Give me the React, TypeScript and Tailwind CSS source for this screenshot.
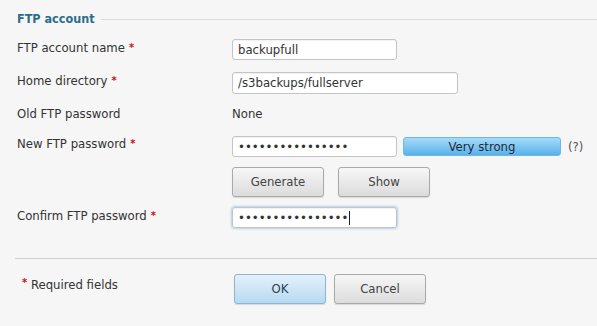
const font = { fontFamily: '"DejaVu Sans Condensed", "DejaVu Sans", Verdana, sans-serif' };

function Req() {
  return <span className="text-[#cc1111] font-bold ml-1 text-[11px] align-top">*</span>;
}

function Label({ text, req }: { text: string; req?: boolean }) {
  return (
    <div className="w-[215px] shrink-0 text-[13px] text-[#333] leading-[16px]">
      {text}
      {req && <Req />}
    </div>
  );
}

function Input({ value, width, tall, caret }: { value: string; width: string; tall?: boolean; caret?: boolean }) {
  return (
    <div
      className={`${width} ${tall ? "h-[22px]" : "h-[21px]"} bg-white border border-[#c4c4c4] rounded-[3px] px-[5px] flex items-center text-[13px] text-[#333] shadow-[inset_0_1px_1px_rgba(0,0,0,0.06)]`}
    >
      <span>{value}</span>
      {caret && <span className="w-px h-[14px] bg-[#222] ml-px" />}
    </div>
  );
}

function Btn({ text, blue }: { text: string; blue?: boolean }) {
  return (
    <button
      className={`w-[92px] h-[30px] rounded-[3px] border text-[13px] shadow-[0_1px_1px_rgba(0,0,0,0.12)] ${
        blue
          ? "border-[#8fb4cf] bg-gradient-to-b from-[#e3f1fb] to-[#b9d9f0] text-[#2b3f55]"
          : "border-[#a9a9a9] bg-gradient-to-b from-[#f6f6f6] to-[#dcdcdc] text-[#444]"
      }`}
    >
      {text}
    </button>
  );
}

const dots = "\u2022".repeat(16);

export default function App() {
  return (
    <div className="w-[597px] h-[326px] bg-[#f6f6f6] overflow-hidden" style={font}>
      <div className="flex items-center pl-[17px] pt-[10px]">
        <span className="text-[12.5px] leading-[17px] font-bold text-[#2b6e8c]">FTP account</span>
        <div className="flex-1 h-px bg-[#dcdcdc] ml-[6px] mt-[2px]" />
      </div>

      <div className="pl-[17px] flex flex-col">
        <div className="flex items-start mt-[13px]">
          <Label text="FTP account name" req />
          <div className="mt-[-1px]">
            <Input value="backupfull" width="w-[165px]" />
          </div>
        </div>

        <div className="flex items-start mt-[13px]">
          <Label text="Home directory" req />
          <div className="mt-[-1px]">
            <Input value="/s3backups/fullserver" width="w-[226px]" tall />
          </div>
        </div>

        <div className="flex items-start mt-[12px]">
          <Label text="Old FTP password" />
          <div className="text-[13px] text-[#333] leading-[16px]">None</div>
        </div>

        <div className="flex items-start mt-[14px]">
          <Label text="New FTP password" req />
          <div className="flex flex-col">
            <div className="flex items-center gap-[6px]">
              <Input value={dots} width="w-[165px]" />
              <div className="w-[158px] h-[19px] rounded-[3px] border border-[#6fb6e4] bg-gradient-to-b from-[#a4dbf9] to-[#58b1ea] flex items-center justify-center text-[13px] text-[#1d2a38]">
                Very strong
              </div>
              <span className="text-[13px] text-[#555] ml-px">(?)</span>
            </div>
            <div className="flex gap-[14px] mt-[10px]">
              <Btn text="Generate" />
              <Btn text="Show" />
            </div>
          </div>
        </div>

        <div className="flex items-start mt-[10px]">
          <div className="pt-[1px]">
            <Label text="Confirm FTP password" req />
          </div>
          <div className="rounded-[3px] shadow-[0_0_2px_1px_rgba(120,170,220,0.5)]">
            <Input value={dots} width="w-[165px]" caret />
          </div>
        </div>
      </div>

      <div className="ml-[15px] h-px bg-[#cfcfcf] mt-[30px]" />

      <div className="flex items-start pl-[22px] mt-[15px]">
        <div className="w-[212px] text-[13px] text-[#333] pt-[1px]">
          <span className="text-[#cc1111] font-bold text-[11px] align-top">*</span> Required fields
        </div>
        <div className="flex gap-[8px]">
          <Btn text="OK" blue />
          <Btn text="Cancel" />
        </div>
      </div>
    </div>
  );
}
